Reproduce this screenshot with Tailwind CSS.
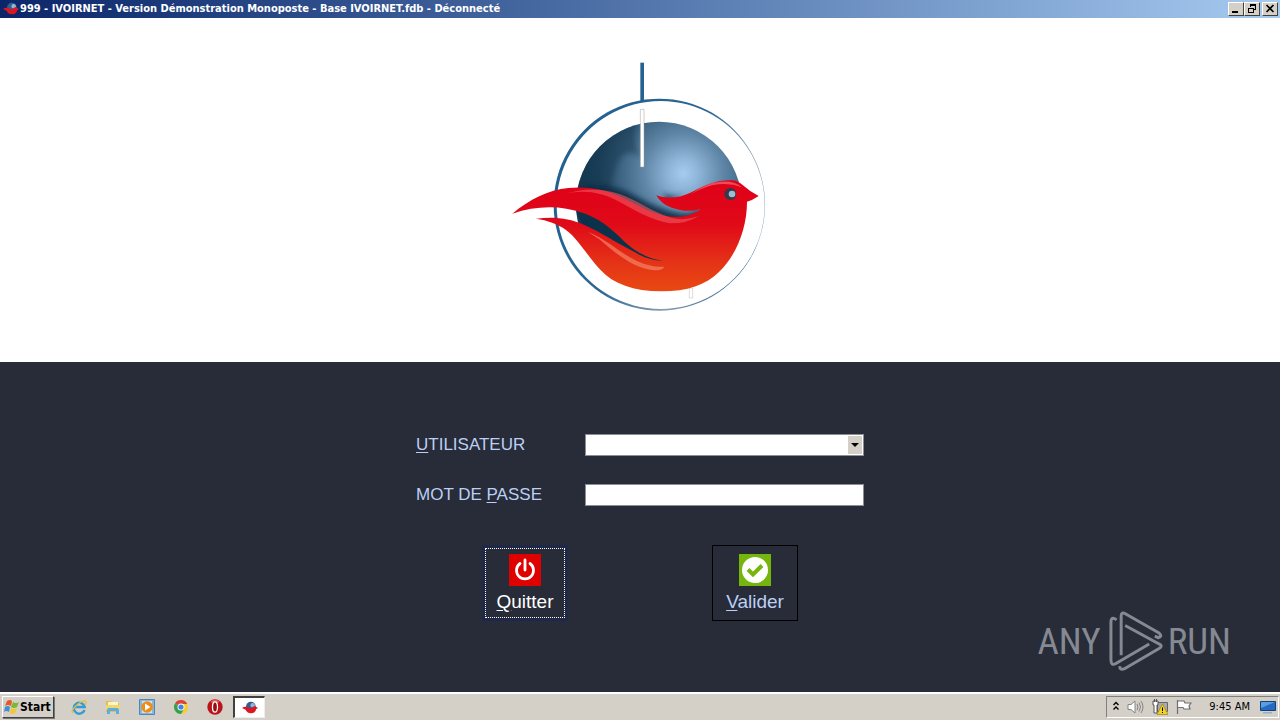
<!DOCTYPE html>
<html lang="fr">
<head>
<meta charset="utf-8">
<title>IVOIRNET</title>
<script src="https://cdn.jsdelivr.net/npm/@tailwindcss/browser@4"></script>
</head>
<body class="flex h-screen flex-col overflow-hidden bg-white font-['Liberation_Sans',Arial,sans-serif]">
<header class="flex h-[18px] shrink-0 items-center bg-linear-to-r from-[#0b2569] to-[#a6caf0] pr-0.5 pl-[3px]">
  <svg class="size-4 shrink-0"><use href="#mini"/></svg>
  <h1 class="ml-px grow text-[11px] leading-[18px] font-bold whitespace-nowrap text-white [font-family:'DejaVu_Sans_Condensed','DejaVu_Sans',sans-serif]">999 - IVOIRNET - Version Démonstration Monoposte - Base IVOIRNET.fdb - Déconnecté</h1>
  <button aria-label="Réduire" class="h-3.5 w-4 border border-t-white border-r-[#404040] border-b-[#404040] border-l-white bg-[#d4d0c8]"><svg viewBox="0 0 14 12" class="h-3 w-3.5"><path d="M3 8h6v2H3z"/></svg></button>
  <button aria-label="Restaurer" class="h-3.5 w-4 border border-t-white border-r-[#404040] border-b-[#404040] border-l-white bg-[#d4d0c8]"><svg viewBox="0 0 14 12" class="h-3 w-3.5" fill="none" stroke="#000" shape-rendering="crispEdges"><path d="M5.500 4V1.500h5v5H9M5 2.500h6M3.500 5.500h5v4h-5zM3 5.500h6"/></svg></button>
  <button aria-label="Fermer" class="ml-0.5 h-3.5 w-4 border border-t-white border-r-[#404040] border-b-[#404040] border-l-white bg-[#d4d0c8]"><svg viewBox="0 0 14 12" class="h-3 w-3.5"><path d="M3.500 2l7 7M10.500 2l-7 7" stroke="#000" stroke-width="1.700"/></svg></button>
</header>

<main class="flex grow flex-col">
  <section class="flex h-[344px] shrink-0 items-center justify-center">
    <svg viewBox="0 0 840 810" class="mb-2.5 h-[270px] w-[280px]" role="img" aria-label="Logo IVOIRNET">
      <defs>
        <linearGradient id="red" x1="0" y1="390" x2="0" y2="725" gradientUnits="userSpaceOnUse"><stop offset="0" stop-color="#df0019"/><stop offset=".4" stop-color="#e00a18"/><stop offset=".75" stop-color="#e53417"/><stop offset="1" stop-color="#e84912"/></linearGradient>
        <radialGradient id="globe" cx="550" cy="370" r="300" gradientUnits="userSpaceOnUse"><stop offset="0" stop-color="#a6cdf0"/><stop offset=".15" stop-color="#8fb5d8"/><stop offset=".4" stop-color="#5f86a6"/><stop offset=".65" stop-color="#3a617f"/><stop offset=".85" stop-color="#1d435e"/><stop offset="1" stop-color="#153a54"/></radialGradient>
        <linearGradient id="ring" x1="200" y1="260" x2="760" y2="600" gradientUnits="userSpaceOnUse"><stop offset="0" stop-color="#22608f"/><stop offset=".5" stop-color="#2c6795"/><stop offset=".8" stop-color="#8b9db0"/><stop offset="1" stop-color="#3c6792"/></linearGradient>
        <filter id="soft" x="-20%" y="-20%" width="140%" height="140%"><feGaussianBlur stdDeviation="8"/></filter>
        <clipPath id="ball"><circle cx="477" cy="464" r="249"/></clipPath>
        <symbol id="mini" viewBox="0 0 18 18">
          <circle cx="10" cy="7.500" r="5.500" fill="#315f8b"/><circle cx="12" cy="6" r="2.500" fill="#8fb7dc"/>
          <path d="M0 9q4-3 8 0 3 1 4-1 2-2 4 0l2 1-2 1q-1 5-6 5-4 0-6-4z" fill="#dd1722"/>
        </symbol>
      </defs>
      <path fill-rule="evenodd" fill="url(#ring)" d="M478 146A317 318 0 1 1 477.900 146ZM482 153A312 312 0 1 0 482.100 153Z"/>
      <path d="M421 38h11v116h-11z" fill="#27618e"/>
      <circle cx="477" cy="464" r="249" fill="url(#globe)"/>
      <g clip-path="url(#ball)">
        <path d="M415 190Q395 265 418 320Q350 270 330 430H200V190z" fill="#12374f" opacity=".5" filter="url(#soft)"/>
        <path d="M230 415Q330 395 400 435T530 490Q580 500 605 475L600 520H420z" fill="#082b43" opacity=".85" filter="url(#soft)"/>
        <path d="M488 425Q500 442 550 435L500 455z" fill="#173b58" opacity=".8" filter="url(#soft)"/>
      </g>
      <path d="M421 178h11v173h-11z" fill="#fff" stroke="#999a99" stroke-width="1.500"/>
      <path d="M568 714h10v30h-10z" fill="#fff" stroke="#bbb" stroke-width="1.500"/>
      <path d="M228 482L300 500 400 590 492 633Q420 640 248 525z" fill="#0c324b"/>
      <path fill="url(#red)" d="M37 491C88 448 145 420 205 414C275 407 334 424 382 450C438 480 480 500 525 501C558 501 586 491 603 477C579 484 558 484 537 479C506 474 482 459 469 436C499 447 540 444 571 428C620 402 659 388 698 391Q715 393 728 405Q750 425 776 438Q757 451 741 455C741 532 711 614 657 666C618 705 562 724 484 724C400 723 340 702 301 659C263 620 236 568 198 540C173 521 142 511 108 506C165 499 207 505 248 523C305 548 352 580 405 607Q442 630 490 633C436 625 400 600 372 574C330 530 293 504 249 489C180 465 109 467 37 491Z"/>
      <path d="M195 432C250 419 300 426 349 451C407 481 452 511 509 520Q562 521 596 498Q551 515 509 502C457 486 416 453 361 433C304 412 244 415 195 432Z" fill="#f1606a" opacity=".55"/>
      <path d="M264 546C318 565 357 608 412 634Q455 653 492 650Q491 661 462 661C393 653 340 603 300 569Z" fill="#f28a68" opacity=".65"/>
      <path d="M571 433Q622 397 660 395Q704 391 726 412Q690 398 655 403Q619 407 571 433Z" fill="#f36a75" opacity=".7"/>
      <circle cx="691" cy="432" r="18" fill="#303b4b"/><circle cx="696" cy="432" r="10" fill="#a3bbd0"/>
    </svg>
  </section>

  <section class="relative grow bg-[#272c38] pt-[72px] text-[#bccff5]">
    <form class="mx-auto w-[448px] max-w-full">
      <div class="grid grid-cols-[169px_1fr] items-center gap-y-7 text-[17px] leading-[22px]">
        <label for="user"><u class="underline-offset-2">U</u>TILISATEUR</label>
        <div class="relative h-[22px]">
          <select id="user" class="block h-full w-full appearance-none border border-[#8b8e94] bg-white text-black"><option></option></select>
          <span class="pointer-events-none absolute top-0.5 right-0.5 bottom-0.5 flex w-3.5 items-center justify-center bg-[#d4d0c8]"><svg viewBox="0 0 8 4" class="h-1 w-2"><path d="M0 0h8L4 4z"/></svg></span>
        </div>
        <label for="pass">MOT DE <u class="underline-offset-2">P</u>ASSE</label>
        <input id="pass" type="password" class="block h-[22px] w-full border border-[#8b8e94] bg-white px-1 text-black">
      </div>
      <div class="mt-[39px] flex justify-center gap-36 text-[19px] leading-6">
        <button type="button" class="h-[76px] w-[86px] border-3 border-[#1e294a] text-white">
          <span class="flex h-full flex-col items-center border border-dotted border-white pt-[5px]">
            <svg viewBox="0 0 32 32" class="size-8 shrink-0"><path fill="#df0000" d="M0 0h32v32H0z"/><path d="M11 9.500a8.500 8.500 0 1 0 10 0M16 6v10" fill="none" stroke="#fff" stroke-width="2.800" stroke-linecap="round"/></svg>
            <span class="mt-1"><u class="underline-offset-2">Q</u>uitter</span>
          </span>
        </button>
        <button type="submit" class="flex h-[76px] w-[86px] flex-col items-center border border-black pt-2">
          <svg viewBox="0 0 32 32" class="size-8 shrink-0"><path fill="#76b60c" d="M0 0h32v32H0z"/><circle cx="16" cy="16" r="13" fill="#fff"/><path d="M9 15.500l5 5 9-9" fill="none" stroke="#76b60c" stroke-width="4"/></svg>
          <span class="mt-1"><u class="underline-offset-2">V</u>alider</span>
        </button>
      </div>
    </form>
    <div class="absolute right-[49px] bottom-5 flex items-center text-[37px] leading-none text-[#858991] [font-family:'Roboto_Condensed',Roboto,'Liberation_Sans',sans-serif]">
      <span class="mr-2">ANY</span>
      <svg viewBox="240 27 165 188" class="mr-1 h-[62px] w-[55px]" fill="none" stroke="#858991" stroke-width="9" stroke-linejoin="round"><path d="M262 57Q245 44 245 65V178Q245 198 260 189L361 130M276 164V45Q276 31 290 39L391 97Q403 107 388 111L378 106M288 74L391 130Q404 136 391 144L286 205Q271 211 272 197"/></svg>
      <span>RUN</span>
    </div>
  </section>
</main>

<footer class="flex h-7 shrink-0 items-center border-t-2 border-white bg-[#d4d0c8] pr-px pl-0.5">
  <button class="flex h-[22px] w-[52px] items-center border border-t-white border-r-[#404040] border-b-[#404040] border-l-white pl-px text-[12px] font-bold shadow-[1px_1px_0_#777] [font-family:'DejaVu_Sans_Condensed','DejaVu_Sans',sans-serif]">
    <svg viewBox="0 0 16 16" class="size-4 shrink-0"><path d="M3 2q3-2 5 0L7 7Q4 5 1 7z" fill="#e95824"/><path d="M9 3q3 2 6 0l-2 5q-3 2-6 0z" fill="#79b936"/><path d="M1 8q3-2 5 0l-1 5q-3-2-5 0z" fill="#3d8fd7"/><path d="M7 9q3 2 6 0l-2 5q-3 2-5 0z" fill="#f6c52e"/></svg>Start
  </button>
  <nav class="ml-[17px] flex items-center" aria-label="Lancement rapide">
    <a href="#" aria-label="Internet Explorer" class="mr-[18px]"><svg viewBox="0 0 16 16" class="size-4"><path d="M13.500 11A5.500 5.500 0 1 1 13.700 8H4" fill="none" stroke="#359bd7" stroke-width="2.400"/><path d="M2 14Q-1 12 6 6 13 0 15 3q.5 1-1 3" fill="none" stroke="#e8bf38" stroke-width="1.300"/></svg></a>
    <a href="#" aria-label="Explorateur" class="mr-[18px]"><svg viewBox="0 0 16 16" class="size-4"><path d="M1 2h5l1 2h7v9H1z" fill="#e5bd50"/><path d="M3 3h10v5H3z" fill="#fff6be"/><path d="M1 6h14v5H1z" fill="#f0d573"/><path d="M2 15v-4q0-2 2-2h8q2 0 2 2v4h-3v-3H5v3z" fill="#5caee1"/></svg></a>
    <a href="#" aria-label="Lecteur multimédia" class="mr-[18px]"><svg viewBox="0 0 16 16" class="size-4"><path d="M.5.5h15v15H.5z" fill="#83b9df" stroke="#4988b9"/><path d="M3 2h10v12H3z" fill="#cde3f3"/><circle cx="8" cy="8" r="5.800" fill="#f28b16"/><path d="M6 4.500v7L11.500 8z" fill="#fff"/></svg></a>
    <a href="#" aria-label="Chrome" class="mr-[18px]"><svg viewBox="0 0 16 16" class="size-4"><circle cx="8" cy="8" r="7" fill="#f9cd24"/><path d="M8 8L2 4.400A7 7 0 0 1 14.200 5H8z" fill="#dc4437"/><path d="M8 8L2 4.400A7 7 0 0 0 8 15l3-5z" fill="#33a154"/><circle cx="8" cy="8" r="3.500" fill="#fff"/><circle cx="8" cy="8" r="2.600" fill="#4382e5"/></svg></a>
    <a href="#" aria-label="Opera" class="mr-2.5"><svg viewBox="0 0 16 16" class="size-4"><circle cx="8" cy="8" r="7.700" fill="#b9141a"/><path d="M3 3q5-5 10 0-5 2-10 0" fill="#df5c5c"/><ellipse cx="8" cy="8" rx="2.500" ry="5.200" fill="#9c0b10" stroke="#fff" stroke-width="1.300"/></svg></a>
    <button aria-label="IVOIRNET" class="flex h-[22px] w-8 items-center justify-center border border-t-2 border-l-2 border-t-[#404040] border-r-[#eee] border-b-[#eee] border-l-[#404040] bg-white"><svg class="size-4"><use href="#mini"/></svg></button>
  </nav>
  <div class="ml-auto flex h-[22px] items-center border border-t-[#808080] border-r-white border-b-white border-l-[#808080] pr-0.5 pl-1.5">
    <svg viewBox="0 0 6 10" class="mr-2 mb-0.5 h-2.5 w-1.5" fill="none" stroke="#000" stroke-width="1.400"><path d="M.5 4L3 1.500 5.500 4M.5 8.500L3 6l2.500 2.500"/></svg>
    <svg viewBox="0 0 17 16" class="mr-2 h-4 w-[17px]" fill="none" stroke="#858585"><path d="M1 5.500h3L8 2v12l-4-3.500H1z" fill="#fff"/><path d="M10 5q2 3 0 6M12 3.500q3 4.500 0 9M14 2q4 6 0 12"/></svg>
    <svg viewBox="0 0 16 16" class="mr-2 size-4"><path d="M5.500 3.500h10v9h-10z" fill="#aaa" stroke="#666"/><path d="M1 2h5v4H5v8H2V6H1z" fill="#fff" stroke="#555"/><path d="M2.500 0v3M4.500 0v3" stroke="#555"/><path d="M10.500 5l5.500 10.500H5z" fill="#f5d323" stroke="#9b8413" stroke-width=".7"/><path d="M10 8.500h1v3.500h-1zm0 4.500h1v1h-1z"/></svg>
    <svg viewBox="0 0 16 16" class="mr-[17px] size-4"><path d="M1.500 1v14M2 2h6l1 2h6l-2 3 1 3H8L7 8.500H2" fill="#fff" stroke="#6d6d6d" stroke-width="1.200"/></svg>
    <time class="mr-2.5 text-[11px] whitespace-nowrap [font-family:'DejaVu_Sans_Condensed','DejaVu_Sans',sans-serif]">9:45 AM</time>
    <svg viewBox="0 0 16 16" class="size-4"><path d="M.5 2.500h15v9H.5z" fill="#236bc0" stroke="#174178"/><path d="M1 3h14L1 9z" fill="#5c9ce3"/><path d="M3 13h9v1.500H3z" fill="#92afd0"/></svg>
  </div>
</footer>
</body>
</html>
